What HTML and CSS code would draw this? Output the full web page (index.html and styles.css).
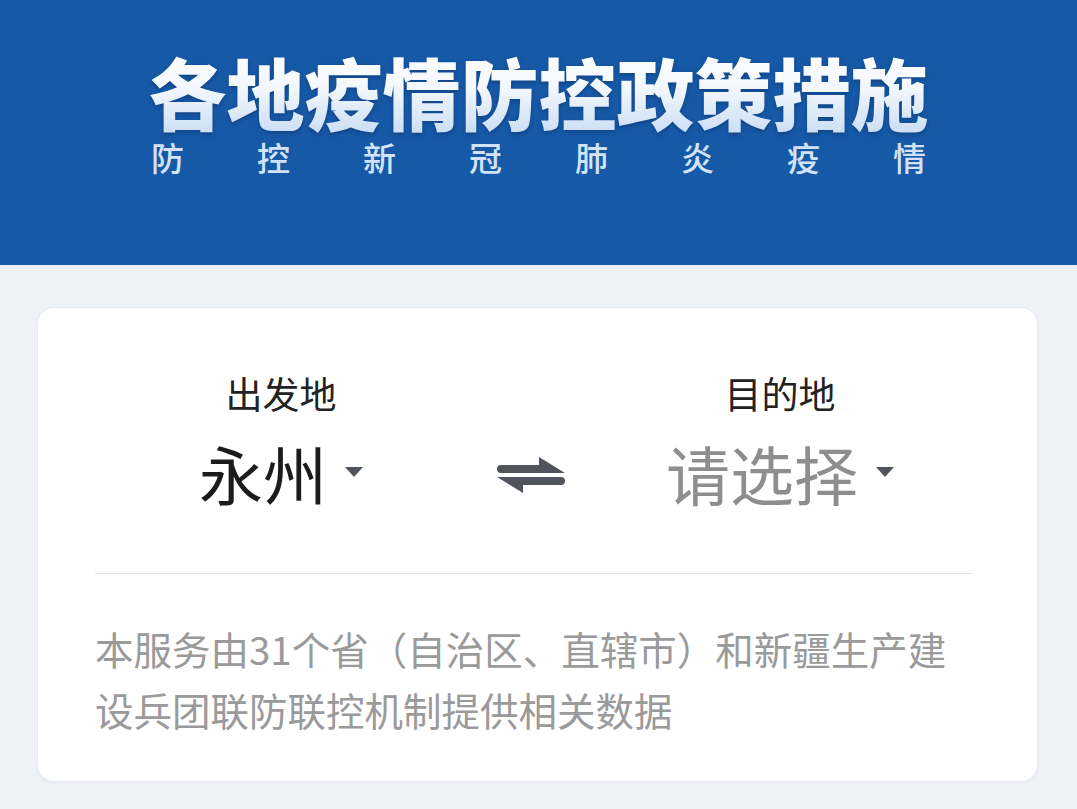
FILE: index.html
```html
<!DOCTYPE html>
<html lang="zh-CN">
<head>
<meta charset="utf-8">
<title>各地疫情防控政策措施</title>
<link rel="stylesheet" href="styles.css">
</head>
<body>
<header class="banner">
  <h1 class="title">各地疫情防控政策措施</h1>
  <div class="subtitle">
    <span>防</span><span>控</span><span>新</span><span>冠</span><span>肺</span><span>炎</span><span>疫</span><span>情</span>
  </div>
</header>
<main class="page">
  <section class="card">
    <div class="route">
      <div class="place">
        <div class="label">出发地</div>
        <div class="value">永州<span class="caret"></span></div>
      </div>
      <div class="swap">
        <svg width="70" height="40" viewBox="0 0 70 40">
          <path d="M43 2 L69 18 H5 A4 4 0 0 1 5 10 H43 Z" fill="#50545c"/>
          <path d="M27 38 L1 22 H65 A4 4 0 0 1 65 30 H27 Z" fill="#50545c"/>
        </svg>
      </div>
      <div class="place">
        <div class="label">目的地</div>
        <div class="value placeholder">请选择<span class="caret"></span></div>
      </div>
    </div>
    <div class="divider"></div>
    <p class="note">本服务由31个省（自治区、直辖市）和新疆生产建设兵团联防联控机制提供相关数据</p>
  </section>
</main>
</body>
</html>
```
FILE: styles.css
```css
* { box-sizing: border-box; }
html, body {
  margin: 0;
  padding: 0;
}
body {
  width: 1077px;
  height: 809px;
  overflow: hidden;
  background: #eef2f7;
  font-family: "Noto Sans CJK SC", "Noto Sans", sans-serif;
}
.banner {
  height: 265px;
  background: #1659a7;
  display: flex;
  flex-direction: column;
  align-items: center;
  padding-top: 45px;
}
.title {
  margin: 0;
  font-size: 78px;
  line-height: 92px;
  font-weight: 900;
  letter-spacing: 0;
  background: linear-gradient(180deg, #ffffff 0%, #f4f8fe 45%, #c9dcf3 100%);
  -webkit-background-clip: text;
  background-clip: text;
  color: transparent;
  filter: drop-shadow(0 2px 2px rgba(8, 40, 90, 0.45));
}
.subtitle {
  width: 775px;
  margin-top: 0;
  display: flex;
  justify-content: space-between;
  font-size: 33px;
  line-height: 40px;
  font-weight: 500;
  color: #d3e3f7;
}
.page {
  padding: 43px 40px 0 38px;
}
.card {
  background: #ffffff;
  border-radius: 16px;
  height: 473px;
  padding: 63px 64px 0 57px;
  box-shadow: 0 0 0 1px #e6eaf0, 0 2px 4px rgba(0, 0, 0, 0.04);
}
.route {
  display: grid;
  grid-template-columns: 372px 128px 370px;
  align-items: end;
}
.place {
  display: flex;
  flex-direction: column;
  align-items: center;
}
.label {
  font-size: 37px;
  line-height: 44px;
  color: #222222;
  margin-bottom: 19px;
}
.value {
  font-size: 64px;
  line-height: 77px;
  color: #1b1b1b;
  display: flex;
  align-items: flex-start;
}
.value.placeholder {
  color: #8e8e8e;
}
.caret {
  width: 0;
  height: 0;
  border-left: 9px solid transparent;
  border-right: 9px solid transparent;
  border-top: 10px solid #50545c;
  margin-left: 18px;
  margin-top: 33px;
}
.swap {
  display: flex;
  justify-content: center;
  padding-bottom: 16px;
}
.swap svg {
  display: block;
}
.divider {
  height: 1px;
  background: #e3e6ea;
  margin-top: 62px;
}
.note {
  margin: 44px 0 0;
  font-size: 38.5px;
  line-height: 61px;
  color: #9a9a9a;
}
```
